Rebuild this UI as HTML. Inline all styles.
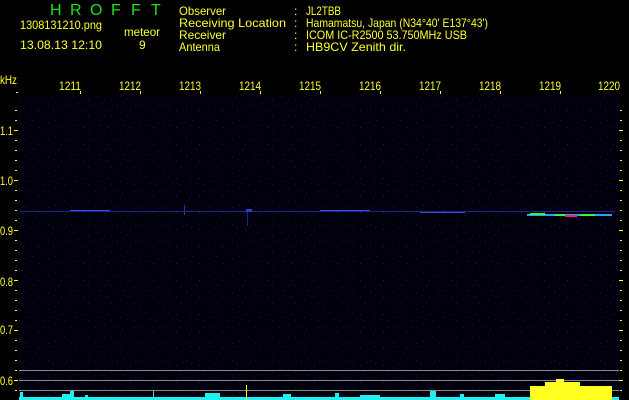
<!DOCTYPE html>
<html><head><meta charset="utf-8"><style>
html,body{margin:0;padding:0;background:#000;width:629px;height:400px;overflow:hidden}
svg{display:block}
text{font-family:"Liberation Sans","DejaVu Sans",sans-serif;font-size:12px;fill:#ffff30}
text.g{fill:#20e020;font-size:16px}
</style></head><body>
<svg width="629" height="400" xmlns="http://www.w3.org/2000/svg">
<defs>
<pattern id="n" width="23" height="17" patternUnits="userSpaceOnUse">
<rect width="23" height="17" fill="#00000c"/>
<rect x="2" y="3" width="1" height="1" fill="#16167a"/>
<rect x="9" y="1" width="1" height="1" fill="#0e0e50"/>
<rect x="15" y="8" width="1" height="1" fill="#1a1a88"/>
<rect x="5" y="11" width="1" height="1" fill="#101060"/>
<rect x="19" y="14" width="1" height="1" fill="#141470"/>
<rect x="12" y="13" width="1" height="1" fill="#0c0c48"/>
<rect x="20" y="4" width="1" height="1" fill="#0c0c48"/>
<rect x="7" y="6" width="1" height="1" fill="#121268"/>
</pattern>
</defs>
<rect x="0" y="0" width="629" height="400" fill="#000"/>
<rect x="19" y="95" width="600" height="305" fill="url(#n)"/>
<!-- header -->
<text class="g" x="50" y="15">H</text><text class="g" x="70" y="15">R</text><text class="g" x="90" y="15">O</text>
<text class="g" x="111" y="15">F</text><text class="g" x="131" y="15">F</text><text class="g" x="151" y="15">T</text>
<text x="20" y="29" textLength="82" lengthAdjust="spacingAndGlyphs">1308131210.png</text>
<text x="124" y="36" textLength="36" lengthAdjust="spacingAndGlyphs">meteor</text>
<text x="20" y="49" textLength="82" lengthAdjust="spacingAndGlyphs">13.08.13 12:10</text>
<text x="139" y="49">9</text>
<text x="179" y="15" textLength="47" lengthAdjust="spacingAndGlyphs">Observer</text>
<text x="179" y="27" textLength="107" lengthAdjust="spacingAndGlyphs">Receiving Location</text>
<text x="179" y="39" textLength="47" lengthAdjust="spacingAndGlyphs">Receiver</text>
<text x="179" y="51" textLength="41" lengthAdjust="spacingAndGlyphs">Antenna</text>
<text x="294" y="15">:</text><text x="294" y="27">:</text><text x="294" y="39">:</text><text x="294" y="51">:</text>
<text x="306" y="15" textLength="35" lengthAdjust="spacingAndGlyphs">JL2TBB</text>
<text x="306" y="27" textLength="182" lengthAdjust="spacingAndGlyphs">Hamamatsu, Japan (N34°40' E137°43')</text>
<text x="306" y="39" textLength="161" lengthAdjust="spacingAndGlyphs">ICOM IC-R2500 53.750MHz USB</text>
<text x="306" y="51" textLength="100" lengthAdjust="spacingAndGlyphs">HB9CV Zenith dir.</text>
<text x="0" y="84" textLength="17" lengthAdjust="spacingAndGlyphs">kHz</text>
<g>
<text x="59" y="90" textLength="22" lengthAdjust="spacingAndGlyphs">1211</text>
<text x="119" y="90" textLength="22" lengthAdjust="spacingAndGlyphs">1212</text>
<text x="179" y="90" textLength="22" lengthAdjust="spacingAndGlyphs">1213</text>
<text x="239" y="90" textLength="22" lengthAdjust="spacingAndGlyphs">1214</text>
<text x="299" y="90" textLength="22" lengthAdjust="spacingAndGlyphs">1215</text>
<text x="359" y="90" textLength="22" lengthAdjust="spacingAndGlyphs">1216</text>
<text x="419" y="90" textLength="22" lengthAdjust="spacingAndGlyphs">1217</text>
<text x="479" y="90" textLength="22" lengthAdjust="spacingAndGlyphs">1218</text>
<text x="539" y="90" textLength="22" lengthAdjust="spacingAndGlyphs">1219</text>
<text x="598" y="90" textLength="22" lengthAdjust="spacingAndGlyphs">1220</text>
</g>
<g fill="#ffff30">
<rect x="80" y="91" width="1" height="3"/><rect x="140" y="91" width="1" height="3"/><rect x="200" y="91" width="1" height="3"/>
<rect x="260" y="91" width="1" height="3"/><rect x="320" y="91" width="1" height="3"/><rect x="380" y="91" width="1" height="3"/>
<rect x="440" y="91" width="1" height="3"/><rect x="500" y="91" width="1" height="3"/><rect x="560" y="91" width="1" height="3"/>
<rect x="16" y="92" width="2" height="1"/>
</g>
<g>
<text x="0" y="135" textLength="13" lengthAdjust="spacingAndGlyphs">1.1</text>
<text x="0" y="185" textLength="13" lengthAdjust="spacingAndGlyphs">1.0</text>
<text x="0" y="235" textLength="13" lengthAdjust="spacingAndGlyphs">0.9</text>
<text x="0" y="286" textLength="13" lengthAdjust="spacingAndGlyphs">0.8</text>
<text x="0" y="334" textLength="13" lengthAdjust="spacingAndGlyphs">0.7</text>
<text x="0" y="385" textLength="13" lengthAdjust="spacingAndGlyphs">0.6</text>
</g>
<g fill="#ffff30" id="lt">
<rect x="15" y="110" width="2" height="1"/><rect x="15" y="120" width="2" height="1"/><rect x="14" y="130" width="4" height="1"/>
<rect x="15" y="140" width="2" height="1"/><rect x="15" y="150" width="2" height="1"/><rect x="15" y="160" width="2" height="1"/>
<rect x="15" y="170" width="2" height="1"/><rect x="14" y="180" width="4" height="1"/><rect x="15" y="190" width="2" height="1"/>
<rect x="15" y="200" width="2" height="1"/><rect x="15" y="210" width="2" height="1"/><rect x="15" y="220" width="2" height="1"/>
<rect x="14" y="230" width="4" height="1"/><rect x="15" y="240" width="2" height="1"/><rect x="15" y="250" width="2" height="1"/>
<rect x="15" y="260" width="2" height="1"/><rect x="15" y="270" width="2" height="1"/><rect x="14" y="280" width="4" height="1"/>
<rect x="15" y="290" width="2" height="1"/><rect x="15" y="300" width="2" height="1"/><rect x="15" y="310" width="2" height="1"/>
<rect x="15" y="320" width="2" height="1"/><rect x="14" y="330" width="4" height="1"/><rect x="15" y="340" width="2" height="1"/>
<rect x="15" y="350" width="2" height="1"/><rect x="15" y="360" width="2" height="1"/><rect x="15" y="370" width="2" height="1"/>
<rect x="14" y="380" width="4" height="1"/><rect x="15" y="390" width="2" height="1"/>
</g>
<use href="#lt" x="605"/>
<!-- meteor trail -->
<rect x="20" y="211" width="595" height="1" fill="#1a2490"/>
<rect x="70" y="210" width="40" height="1" fill="#3050d0"/>
<rect x="184" y="205" width="1" height="10" fill="#3030a0"/>
<rect x="246" y="209" width="6" height="3" fill="#2a40c0"/>
<rect x="247" y="212" width="1" height="14" fill="#202090"/>
<rect x="320" y="210" width="50" height="1" fill="#3050d0"/>
<rect x="420" y="212" width="45" height="1" fill="#3050d0"/>
<rect x="527" y="214" width="85" height="2" fill="#30a0ff"/>
<rect x="530" y="213" width="15" height="2" fill="#30ff30"/>
<rect x="555" y="214" width="10" height="2" fill="#30ff30"/>
<rect x="565" y="215" width="12" height="2" fill="#ff2060"/>
<rect x="580" y="214" width="15" height="2" fill="#30ff30"/>
<!-- gray lines -->
<rect x="19" y="370" width="600" height="1" fill="#8a8a8a"/>
<rect x="19" y="380" width="600" height="1" fill="#8a8a8a"/>
<rect x="19" y="390" width="600" height="1" fill="#8a8a8a"/>
<!-- histogram -->
<g fill="#20f0f0">
<rect x="19" y="397" width="600" height="3"/>
<rect x="20" y="392" width="3" height="8"/><rect x="62" y="394" width="10" height="6"/>
<rect x="70" y="391" width="4" height="9"/><rect x="85" y="395" width="3" height="5"/>
<rect x="153" y="391" width="1" height="9"/><rect x="205" y="393" width="15" height="7"/>
<rect x="283" y="394" width="8" height="6"/><rect x="335" y="393" width="4" height="7"/>
<rect x="360" y="395" width="20" height="5"/><rect x="430" y="391" width="6" height="9"/>
<rect x="460" y="394" width="4" height="6"/><rect x="495" y="394" width="10" height="6"/>
<rect x="595" y="392" width="12" height="8"/>
</g>
<rect x="246" y="385" width="1" height="15" fill="#ffff30"/>
<rect x="530" y="386" width="82" height="14" fill="#ffff20"/>
<rect x="545" y="382" width="35" height="4" fill="#ffff20"/>
<rect x="556" y="379" width="8" height="3" fill="#ffff20"/>
</svg>
</body></html>
